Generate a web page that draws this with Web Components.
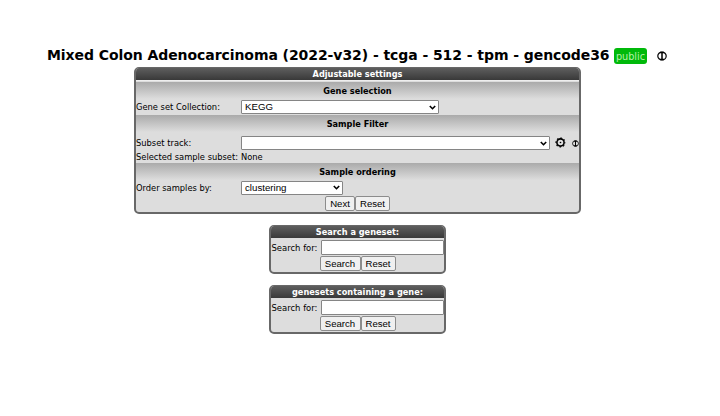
<!DOCTYPE html>
<html lang="en"><head><meta charset="utf-8"><title>Mixed Colon Adenocarcinoma</title>
<style>
body{margin:0;width:720px;height:416px;background:#fff;color:#000;font-family:"DejaVu Sans Condensed","DejaVu Sans",sans-serif;font-size:9.25px;overflow:hidden}
</style></head><body>
<data-page></data-page>
<script>
const define=(name,html)=>{
  const t=document.createElement('template');t.innerHTML=html;
  customElements.define(name,class extends HTMLElement{
    constructor(){super();this.attachShadow({mode:'open'}).append(t.content.cloneNode(true));}
  });
};
define('info-icon',`<style>:host{display:block;width:10px;height:10px}svg{display:block;width:100%;height:100%}</style>
<svg viewBox="0 0 10 10" fill="none" stroke="#000"><ellipse cx="5" cy="5" rx="4.2" ry="3.9" stroke-width="1.2"/><path d="M3.2 1.6H6.8M5 1.5V8.5M3.2 8.4H6.8" stroke-width="1.5"/></svg>`);
define('gear-icon',`<style>:host{display:block;width:11px;height:11px}svg{display:block}</style>
<svg width="11" height="11" viewBox="0 0 11 11" fill="none" stroke="#000"><circle cx="5.5" cy="5.5" r="3.6" stroke-width="1.6"/><circle cx="5.5" cy="5.5" r="4.5" stroke-width="1.2" stroke-dasharray="1.5 2.034" stroke-dashoffset=".75"/><circle cx="5.5" cy="5.5" r=".8" fill="#000" stroke="none"/></svg>`);
define('form-button',`<style>:host{display:block;box-sizing:border-box;height:15px;border:1px solid #8c8c8c;border-radius:2px;background:#f0f0f0;font:9.6px/13px "Liberation Sans",sans-serif;text-align:center;white-space:nowrap}</style><slot></slot>`);
define('select-box',`<style>:host{display:flex;justify-content:space-between;align-items:center;box-sizing:border-box;height:13.5px;border:1px solid #858585;border-radius:1px;background:#fff;padding:0 2.5px 0 3px;font:9.7px/12px "Liberation Sans",sans-serif}svg{flex:none}</style>
<span><slot></slot></span><svg width="7" height="5" viewBox="0 0 7 5"><path d="M.8 1L3.5 3.7 6.2 1" fill="none" stroke="#000" stroke-width="1.6"/></svg>`);
define('text-box',`<style>:host{display:block;box-sizing:border-box;height:15px;border:1px solid #858585;border-radius:1px;background:#fff}</style>`);
define('settings-panel',`<style>:host{display:block;box-sizing:border-box;border:2px solid #686868;border-top-width:1px;border-radius:5px;background:#ddd;overflow:hidden}
header{height:12px;background:linear-gradient(#5e5e5e,#393939);color:#fff;font-size:9.1px;font-weight:bold;line-height:12px;text-align:center}</style><header><slot name="title"></slot></header><slot></slot>`);
define('section-bar',`<style>:host{display:block;box-sizing:border-box;height:17px;background:linear-gradient(#aaa,#ddd);font-size:9.1px;font-weight:bold;line-height:18px;text-align:center}</style><slot></slot>`);
define('form-row',`<style>:host{display:grid;grid-template-columns:105px 1fr;align-items:center;white-space:nowrap}</style><slot></slot>`);
define('search-panel',`<style>:host{display:block;width:177px}settings-panel{height:49px}
.r{display:flex;align-items:center;margin-top:2px;height:15px}.r span{box-sizing:border-box;padding-left:.5px;width:50px;white-space:nowrap;font-size:9.4px}text-box{width:122.5px}
.b{display:flex;margin:1px 0 0 48.5px}</style>
<settings-panel><span slot="title"><slot></slot></span><div class="r"><span>Search for:</span><text-box></text-box></div>
<div class="b"><form-button style="width:41px">Search</form-button><form-button style="width:35px">Reset</form-button></div></settings-panel>`);
define('data-page',`<style>
:host{display:flex;flex-direction:column;align-items:center;width:715px;padding-top:46px}
.t{display:flex;align-items:center;align-self:flex-start;margin-left:47px;height:20px;white-space:nowrap}
h1{margin:0 0 2px;width:567px;letter-spacing:-.07px;font:bold 14px/18px "DejaVu Sans",sans-serif}
.p{box-sizing:border-box;width:33px;height:16px;border-radius:3px;background:#00b90a;color:#b4f0a8;font-size:10.8px;line-height:17px;text-align:center}
.t info-icon{margin-left:10px}
.main{width:447px;height:147px;margin-top:1px}
search-panel{margin-top:11px}
.b{display:flex;margin:.5px 0 0 189px}
.tools{display:flex;align-items:center}.tools gear-icon{margin:-1px 0 0 5px}.tools info-icon{width:7px;height:7px;margin:1px 0 0 6px}
form-row>span{position:static}
.up{margin-top:-2px}
</style>
<div class="t"><h1>Mixed Colon Adenocarcinoma (2022-v32) - tcga - 512 - tpm - gencode36</h1><span class="p">public</span><info-icon></info-icon></div>
<settings-panel class="main"><span slot="title">Adjustable settings</span>
<div style="height:1px;background:#eee;margin-bottom:1px"></div>
<section-bar>Gene selection</section-bar>
<form-row style="height:16px"><span class="up">Gene set Collection:</span><select-box style="width:198px">KEGG</select-box></form-row>
<section-bar>Sample Filter</section-bar>
<form-row style="height:22px"><span class="up">Subset track:</span><div class="tools"><select-box style="width:309px"></select-box><gear-icon></gear-icon><info-icon></info-icon></div></form-row>
<form-row style="height:9px"><span style="margin-top:-4px">Selected sample subset:</span><span style="margin-top:-4px">None</span></form-row>
<section-bar>Sample ordering</section-bar>
<form-row style="height:15.5px"><span>Order samples by:</span><select-box style="width:102px">clustering</select-box></form-row>
<div class="b"><form-button style="width:30px">Next</form-button><form-button style="width:35px">Reset</form-button></div>
</settings-panel>
<search-panel>Search a geneset:</search-panel><search-panel>genesets containing a gene:</search-panel>`);
</script></body></html>
